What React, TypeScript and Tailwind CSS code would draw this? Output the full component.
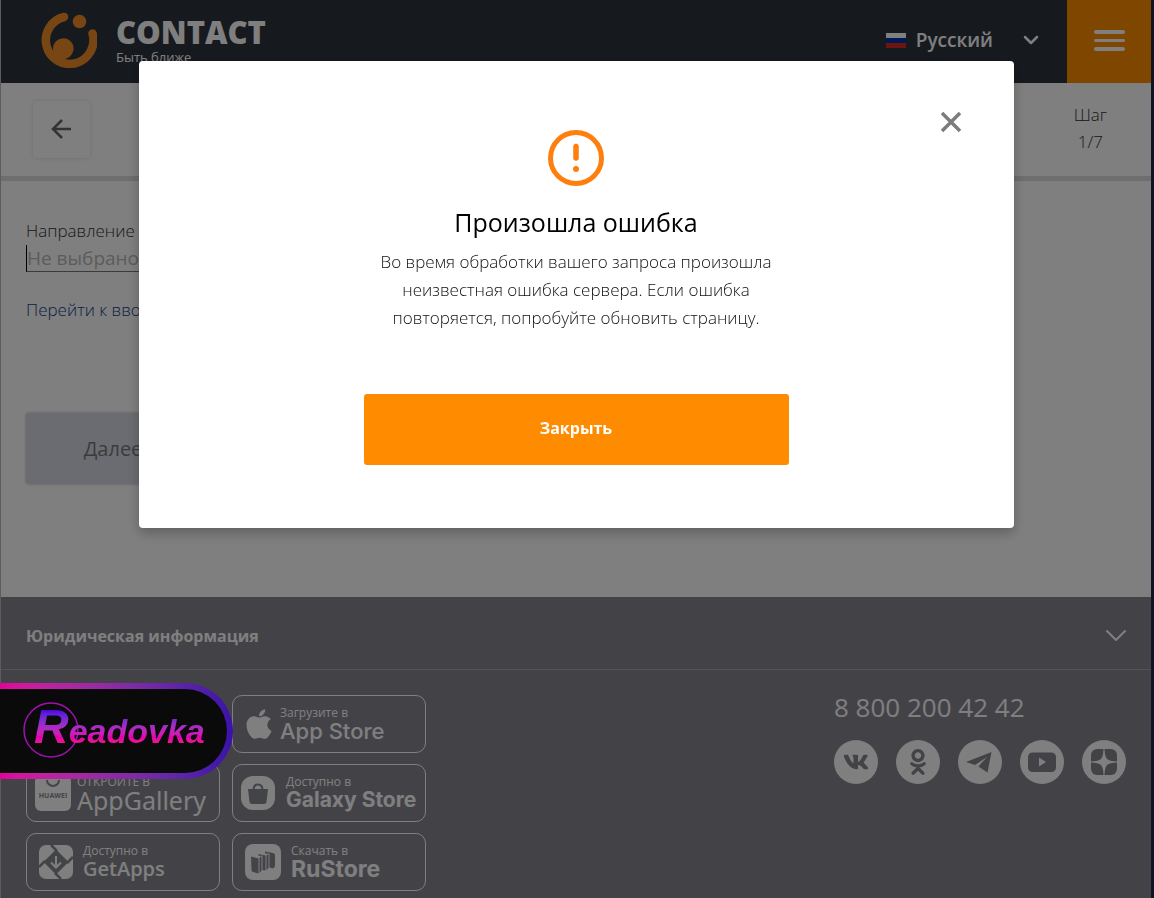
import React from 'react';
import { FaApple, FaVk, FaOdnoklassniki } from 'react-icons/fa';

function ContactLogo() {
  return (
    <a href="#home" aria-label="CONTACT" className="flex items-center gap-[19px]">
      <svg viewBox="0 0 56 56" className="size-14" fill="none" aria-hidden="true">
        <path d="M23 5A23.800 23.800 0 1 0 51.500 21.500" stroke="#f08c25" strokeWidth="8.500" strokeLinecap="round" />
        <circle cx="38.500" cy="9.500" r="6.800" fill="#f08c25" />
        <path d="M12 37A10.300 10.300 0 1 1 32.500 38Q31 45 24 47Q26 49 28 49L17 49Q12 44 12 37Z" fill="#f08c25" />
      </svg>
      <span className="flex flex-col text-white">
        <span className="text-[31px] leading-[34px] font-extrabold">CONTACT</span>
        <span className="text-[13px] leading-4 font-medium">Быть ближе</span>
      </span>
    </a>
  );
}

function Header() {
  return (
    <header className="flex h-[83px] items-stretch justify-between bg-[#2d343f] pl-10">
      <div className="flex pb-[3px]">
        <ContactLogo />
      </div>
      <div className="flex items-stretch">
        <button type="button" className="flex items-center gap-[10px] pr-7 pb-[3px] text-[19px] font-semibold text-white">
          <span className="flex w-5 flex-col">
            <span className="h-[5px] bg-white" />
            <span className="h-[5px] bg-[#0030a8]" />
            <span className="h-[5px] bg-[#d52b1e]" />
          </span>
          Русский
          <svg viewBox="0 0 16 10" className="ml-5 h-[10px] w-4" fill="none" stroke="currentColor" strokeWidth="2.500" strokeLinecap="round" strokeLinejoin="round" aria-hidden="true">
            <path d="M2 2L8 8L14 2" />
          </svg>
        </button>
        <button type="button" aria-label="Меню" className="flex w-[84px] flex-col items-center justify-center gap-[5px] bg-[#ff8c00] pb-[2px]">
          <span className="h-1 w-[31px] rounded-full bg-white" />
          <span className="h-[3px] w-[31px] rounded-full bg-white" />
          <span className="h-1 w-[31px] rounded-full bg-white" />
        </button>
      </div>
    </header>
  );
}

function GetAppsIcon() {
  return (
    <svg viewBox="0 0 34 34" className="size-[34px]" aria-hidden="true">
      <rect width="34" height="34" rx="7" fill="#fff" />
      <path d="M17 4.500L29.500 17L17 29.500L4.500 17Z" fill="#878890" />
      <path d="M12 0L18 6M34 12L28 18M22 34L16 28M0 22L6 16" stroke="#878890" strokeWidth="2.500" />
      <path d="M17 11V22M12 17.500L17 22.500L22 17.500" stroke="#fff" strokeWidth="2" fill="none" />
    </svg>
  );
}

function HuaweiIcon() {
  return (
    <svg viewBox="0 0 36 36" className="size-9" aria-hidden="true">
      <rect width="36" height="36" rx="6" fill="#fff" />
      <path d="M12 5A6 6 0 0 0 24 5" stroke="#878890" strokeWidth="2" fill="none" />
      <text x="18" y="23" textAnchor="middle" fontSize="7" fontWeight="700" fill="#878890">HUAWEI</text>
    </svg>
  );
}

function GalaxyIcon() {
  return (
    <svg viewBox="0 0 34 34" className="size-[34px]" aria-hidden="true">
      <rect width="34" height="34" rx="12" fill="#fff" />
      <path d="M7 13H27L25.500 26Q25.300 28 23 28H11Q8.700 28 8.500 26Z" fill="#878890" />
      <path d="M12.500 14Q12.500 8.500 17 8.500T21.500 14" fill="none" stroke="#878890" strokeWidth="2" />
    </svg>
  );
}

function RuStoreIcon() {
  return (
    <svg viewBox="0 0 36 36" className="size-9" aria-hidden="true">
      <rect width="36" height="36" rx="8" fill="#fff" />
      <path d="M6 12.500L13.500 14.500V29.500L8 28Q6.500 27.500 6.500 26Z" fill="#878890" />
      <path d="M14.500 14L16.500 12V26.500L14.500 29Z" fill="#878890" />
      <path d="M13.500 10L20.500 11.500V26.500L17.500 26V11.500L13.500 12Z" fill="#878890" />
      <path d="M21.500 11.500L23.500 10V24L21.500 26Z" fill="#878890" />
      <path d="M20 7.500L28 9Q30 9.500 30 11V22.500L28 24.500L24.500 23.500V9.500L20 9.500Z" fill="#878890" />
    </svg>
  );
}

function PlayIcon() {
  return (
    <svg viewBox="0 0 32 36" className="h-9 w-8" aria-hidden="true">
      <path d="M3 3L28 18L3 33Z" fill="#fff" />
    </svg>
  );
}

type Store = { small: string; name: string; icon: React.ReactNode; pad: string; nameClass: string };

const stores: Store[] = [
  { small: 'Доступно в', name: 'Google Play', icon: <PlayIcon />, pad: 'pl-3 gap-3', nameClass: 'text-[22px]' },
  { small: 'Загрузите в', name: 'App Store', icon: <FaApple className="size-[34px]" />, pad: 'pl-[9px] gap-1', nameClass: "text-[22px] font-medium font-['Inter',sans-serif]" },
  { small: 'ОТКРОЙТЕ В', name: 'AppGallery', icon: <HuaweiIcon />, pad: 'pl-2 gap-[6px]', nameClass: "text-[25px] font-['Noto_Sans',sans-serif]" },
  { small: 'Доступно в', name: 'Galaxy Store', icon: <GalaxyIcon />, pad: 'pl-2 gap-[11px]', nameClass: "text-[21px] font-bold font-['Inter',sans-serif]" },
  { small: 'Доступно в', name: 'GetApps', icon: <GetAppsIcon />, pad: 'pl-3 gap-[10px]', nameClass: 'text-xl font-semibold' },
  { small: 'Скачать в', name: 'RuStore', icon: <RuStoreIcon />, pad: 'pl-3 gap-[10px]', nameClass: "text-[23px] font-bold font-['Inter',sans-serif]" },
];

function StoreLink({ store }: { store: Store }) {
  return (
    <a href="#store" className={`flex h-[58px] items-center rounded-[10px] border border-white whitespace-nowrap text-white ${store.pad}`}>
      {store.icon}
      <span className="flex flex-col pb-[3px]">
        <span className="text-xs leading-4">{store.small}</span>
        <span className={`leading-5 ${store.nameClass}`}>{store.name}</span>
      </span>
    </a>
  );
}

function TelegramIcon() {
  return (
    <svg viewBox="0 0 44 44" className="size-11" aria-hidden="true">
      <path d="M8 22L33.500 12L29.500 32.500L20.500 26.500L29 17L17 25Z" fill="#86878f" />
    </svg>
  );
}

function YoutubeIcon() {
  return (
    <svg viewBox="0 0 44 44" className="size-11" aria-hidden="true">
      <rect x="8" y="12.500" width="28" height="19.500" rx="4.500" fill="#86878f" />
      <path d="M19 17.500L26 22L19 26.500Z" fill="#fff" />
    </svg>
  );
}

function ZenIcon() {
  return (
    <svg viewBox="0 0 44 44" className="size-11" aria-hidden="true">
      <rect x="9" y="9" width="26" height="26" rx="6" fill="#86878f" />
      <path d="M22.500 9Q22.800 16.500 25 19Q27.500 21.200 35 21.500V22.500Q27.500 22.800 25 25Q22.800 27.500 22.500 35H21.500Q21.200 27.500 19 25Q16.500 22.800 9 22.500V21.500Q16.500 21.200 19 19Q21.200 16.500 21.500 9Z" fill="#fff" />
    </svg>
  );
}

const socials = [
  { label: 'ВКонтакте', icon: <FaVk className="size-[26px]" /> },
  { label: 'Одноклассники', icon: <FaOdnoklassniki className="size-[26px]" /> },
  { label: 'Telegram', icon: <TelegramIcon /> },
  { label: 'YouTube', icon: <YoutubeIcon /> },
  { label: 'Дзен', icon: <ZenIcon /> },
];

function Footer() {
  return (
    <footer className="flex-1 bg-[#86878f] text-white">
      <button type="button" className="flex h-[73px] w-full items-center justify-between border-b border-[#a2a7ab] pt-[5px] pr-6 pl-[25px] text-left text-base font-bold">
        Юридическая информация
        <svg viewBox="0 0 22 14" className="h-[14px] w-[22px]" fill="none" stroke="currentColor" strokeWidth="2" strokeLinecap="round" strokeLinejoin="round" aria-hidden="true">
          <path d="M2 2L11 11L20 2" />
        </svg>
      </button>
      <div className="flex items-start justify-between pt-[25px] pr-[25px] pl-[25px]">
        <nav className="grid grid-cols-[194px_194px] gap-x-3 gap-y-[11px]" aria-label="Приложения">
          {stores.map((s) => (
            <StoreLink key={s.name} store={s} />
          ))}
        </nav>
        <div>
          <a href="tel:88002004242" className="block text-[26px] leading-6">8 800 200 42 42</a>
          <div className="mt-[21px] flex justify-between gap-[18px]">
            {socials.map((s) => (
              <a key={s.label} href="#social" aria-label={s.label} className="flex size-11 items-center justify-center rounded-full bg-white text-[#86878f]">
                {s.icon}
              </a>
            ))}
          </div>
        </div>
      </div>
    </footer>
  );
}

function ErrorDialog() {
  return (
    <div className="fixed inset-0 flex items-start justify-center bg-black/50 pt-[61px] pr-[2px]">
      <div role="dialog" aria-modal="true" aria-labelledby="error-title" className="relative flex w-[76%] max-w-[875px] flex-col items-center rounded bg-white pt-[68px] pb-[63px] shadow-[0_5px_12px_rgba(0,0,0,0.25)]">
        <button type="button" aria-label="Закрыть окно" className="absolute top-[50px] right-[52px] text-[#7c7c7c]">
          <svg viewBox="0 0 22 22" className="size-[22px]" stroke="currentColor" strokeWidth="3.500" aria-hidden="true">
            <path d="M2 2L20 20M20 2L2 20" />
          </svg>
        </button>
        <svg viewBox="0 0 58 58" className="size-[58px]" fill="none" aria-hidden="true">
          <circle cx="29" cy="29" r="25.500" stroke="#ff7f0e" strokeWidth="5" />
          <path d="M29 17.500V29" stroke="#ff7f0e" strokeWidth="5.500" strokeLinecap="round" />
          <circle cx="29" cy="40" r="3" fill="#ff7f0e" />
        </svg>
        <h1 id="error-title" className="mt-[19px] text-[25px] leading-8 text-black">Произошла ошибка</h1>
        <p className="mt-[10px] w-[425px] text-center text-[17px] leading-7 font-light text-[#111]">
          Во время обработки вашего запроса произошла неизвестная ошибка сервера. Если ошибка повторяется, попробуйте обновить страницу.
        </p>
        <button type="button" className="mt-[62px] h-[71px] w-[425px] rounded-[3px] bg-[#ff8c00] pb-[3px] text-base font-bold text-white">
          Закрыть
        </button>
      </div>
    </div>
  );
}

function ReadovkaBadge() {
  return (
    <div className="fixed top-[683px] left-0 h-24 w-[233px] rounded-r-full bg-gradient-to-r from-[#e0009c] to-[#3a12a8] py-[6px] pr-[6px]">
      <div className="relative flex h-full items-center rounded-r-full bg-[#0a0a0b] pl-[34px]">
        <svg viewBox="0 0 60 60" className="absolute top-[12px] left-[22px] size-[60px]" fill="none" aria-hidden="true">
          <circle cx="29" cy="29" r="27" stroke="#a010b0" strokeWidth="1.500" />
        </svg>
        <span className="relative bg-gradient-to-b from-[#4b00e0] from-15% via-[#e000b0] via-60% to-[#ff0040] to-85% bg-clip-text pr-1 font-['Liberation_Sans',sans-serif] text-[34px] leading-[60px] font-bold text-transparent italic">
          <span className="text-5xl">R</span>eadovka
        </span>
      </div>
    </div>
  );
}

export default function App() {
  return (
    <div className="flex min-h-screen flex-col border-r-3 border-l border-r-[#1c2c48] border-l-[#b8b8b8] bg-white font-['Open_Sans','Noto_Sans',sans-serif]">
      <Header />
      <div className="flex h-[98px] items-start justify-between border-b-[5px] border-[#dcdcdc] pt-[18px] pr-11 pl-8">
        <button type="button" aria-label="Назад" className="flex size-[57px] items-center justify-center rounded-[3px] pr-[2px] pb-[2px] text-[#666] shadow-[0_0_4px_rgba(0,0,0,0.15)]">
          <svg viewBox="0 0 22 22" className="size-[22px]" fill="none" stroke="currentColor" strokeWidth="2.500" aria-hidden="true">
            <path d="M21 11H3M12 2L3 11L12 20" />
          </svg>
        </button>
        <p className="text-center text-[17px] leading-[27px] font-light text-[#333]">Шаг<br />1/7</p>
      </div>
      <main className="h-[416px] px-[25px] pt-9 text-[#666]">
        <label htmlFor="direction" className="block text-[17px] leading-7 font-light text-[#333]">Направление перевода</label>
        <input id="direction" type="text" placeholder="Не выбрано" className="block h-[27px] w-2/3 border-b border-l border-b-[#777] border-l-black text-[19px] text-[#333] outline-none placeholder:text-[#b8b8b8]" />
        <a href="#details" className="mt-6 block text-[17px] leading-7 font-light text-[#10408c]">Перейти к вводу реквизитов</a>
        <button type="button" className="mt-[89px] h-[71px] w-[174px] rounded-[3px] bg-[#d5d9e3] text-xl text-[#777] shadow-[0_0_3px_rgba(0,0,0,0.3)]">Далее</button>
      </main>
      <Footer />
      <ErrorDialog />
      <ReadovkaBadge />
    </div>
  );
}
